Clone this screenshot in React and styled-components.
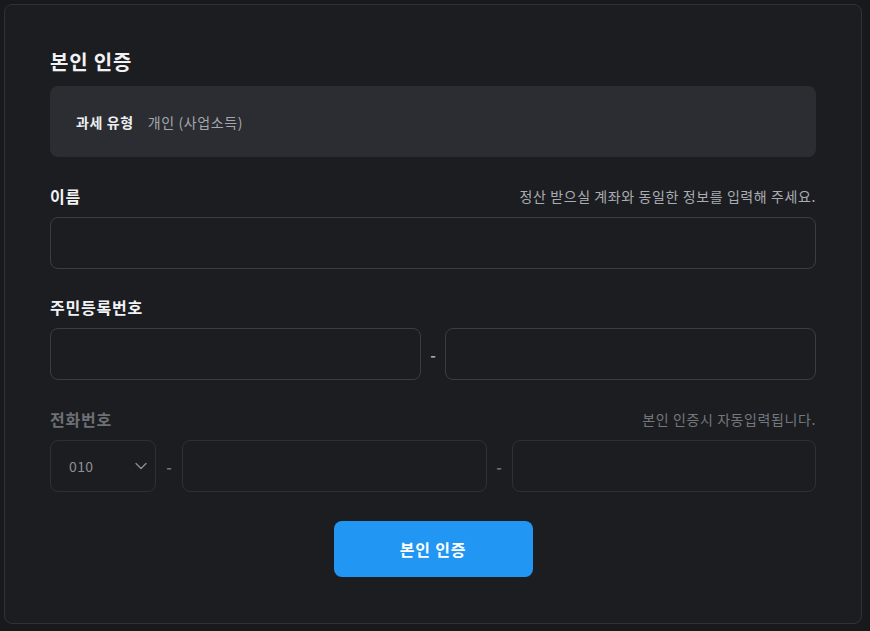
import styled, { createGlobalStyle } from 'styled-components';
import { ChevronDown } from 'lucide-react';

const Global = createGlobalStyle`
    body {
        margin: 0;
        background: #18191c;
        font-family: "Noto Sans CJK KR", "Noto Sans", sans-serif;
        color: #f1f2f4;
    }
`

const Card = styled.div`
    margin: 4px;
    width: 858px;
    box-sizing: border-box;
    padding: 43px 45px 46px;
    background: #1c1d21;
    border: 1px solid #303237;
    border-radius: 8px;
`

const Title = styled.h2`
    margin: 0 0 10px;
    font-size: 20px;
    line-height: 28px;
    font-weight: 700;
    letter-spacing: 0.8px;
`

const InfoBox = styled.div`
    height: 71px;
    border-radius: 8px;
    background: #2b2d32;
    display: flex;
    align-items: center;
    padding: 0 26px;
    gap: 14px;
    font-size: 14px;
    letter-spacing: 0.6px;
`

const InfoKey = styled.span`
    font-weight: 700;
    color: #eceef0;
`

const InfoValue = styled.span`
    color: #a4a7ad;
`

const Section = styled.div`
    margin-top: ${p => p.$top || 28}px;
`

const LabelRow = styled.div`
    display: flex;
    justify-content: space-between;
    align-items: center;
    height: 22px;
    margin-bottom: 10px;
`

const Label = styled.span`
    font-size: 16px;
    font-weight: 700;
    letter-spacing: 0.8px;
    color: ${p => (p.$disabled ? '#6d7076' : '#f1f2f4')};
`

const Hint = styled.span`
    font-size: 14px;
    letter-spacing: 0.6px;
    color: ${p => (p.$disabled ? '#74777d' : '#a9acb2')};
`

const Row = styled.div`
    display: flex;
    align-items: center;
`

const Input = styled.input`
    flex: 1;
    min-width: 0;
    height: 52px;
    box-sizing: border-box;
    background: transparent;
    border: 1px solid ${p => (p.disabled ? '#2e3035' : '#3b3d42')};
    border-radius: 8px;
    padding: 0 16px;
    color: #f1f2f4;
    font: inherit;
    outline: none;
`

const Dash = styled.span`
    width: ${p => p.$w || 24}px;
    text-align: center;
    font-size: 15px;
    font-weight: 700;
    color: ${p => (p.$disabled ? '#6d7076' : '#a9acb2')};
`

const Select = styled.div`
    width: 106px;
    height: 52px;
    box-sizing: border-box;
    border: 1px solid #2e3035;
    border-radius: 8px;
    display: flex;
    align-items: center;
    justify-content: space-between;
    padding: 0 4px 0 18px;
    font-size: 14px;
    letter-spacing: 0.4px;
    color: #8d9096;
`

const Footer = styled.div`
    display: flex;
    justify-content: center;
    margin-top: 29px;
`

const Button = styled.button`
    width: 199px;
    height: 56px;
    border: none;
    border-radius: 8px;
    background: #2196f3;
    color: #fff;
    font: inherit;
    font-size: 16px;
    font-weight: 700;
    letter-spacing: 0.8px;
    cursor: pointer;
`

function App() {
    return (
        <>
            <Global />
            <Card>
                <Title>본인 인증</Title>
                <InfoBox>
                    <InfoKey>과세 유형</InfoKey>
                    <InfoValue>개인 (사업소득)</InfoValue>
                </InfoBox>

                <Section>
                    <LabelRow>
                        <Label>이름</Label>
                        <Hint>정산 받으실 계좌와 동일한 정보를 입력해 주세요.</Hint>
                    </LabelRow>
                    <Row>
                        <Input />
                    </Row>
                </Section>

                <Section $top={27}>
                    <LabelRow>
                        <Label>주민등록번호</Label>
                    </LabelRow>
                    <Row>
                        <Input />
                        <Dash>-</Dash>
                        <Input type="password" />
                    </Row>
                </Section>

                <Section $top={28}>
                    <LabelRow>
                        <Label $disabled>전화번호</Label>
                        <Hint $disabled>본인 인증시 자동입력됩니다.</Hint>
                    </LabelRow>
                    <Row>
                        <Select>
                            <span>010</span>
                            <ChevronDown size={20} strokeWidth={1.5} color="#8d9096" />
                        </Select>
                        <Dash $w={26} $disabled>-</Dash>
                        <Input disabled />
                        <Dash $w={25} $disabled>-</Dash>
                        <Input disabled />
                    </Row>
                </Section>

                <Footer>
                    <Button>본인 인증</Button>
                </Footer>
            </Card>
        </>
    );
}

export default App;
